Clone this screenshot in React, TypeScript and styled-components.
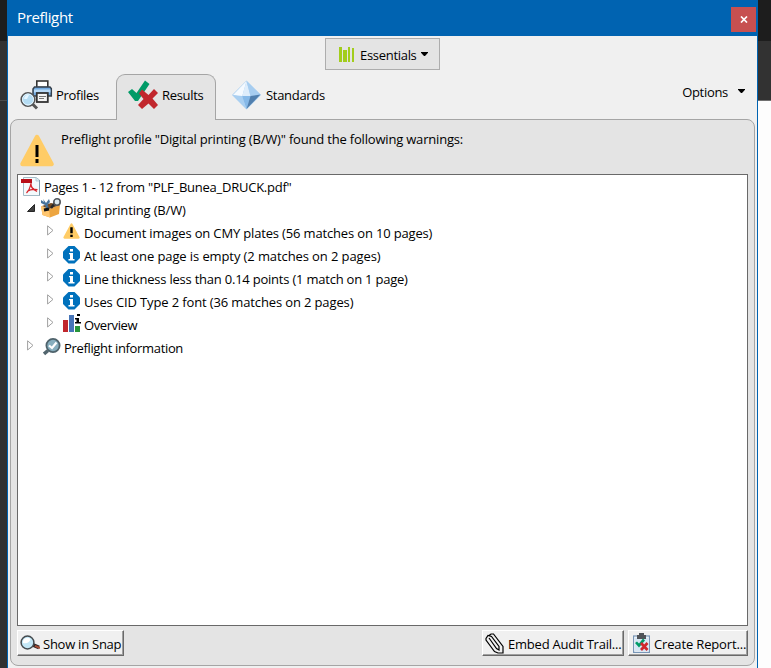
import React from "react";
import styled, { createGlobalStyle } from "styled-components";

const GlobalStyle = createGlobalStyle`
  * { box-sizing: border-box; }
  body { margin: 0; font-family: "Open Sans", "Noto Sans", sans-serif; font-size: 13px; color: #000; }
  svg { display: block; flex: none; }
`;

const Desktop = styled.div`
  display: grid;
  grid-template-columns: 7px 751px 13px;
  width: 771px;
  height: 668px;
  overflow: hidden;
`;
const LeftEdge = styled.div`
  background: linear-gradient(#1d1d1d 41px, #323232 41px, #323232 100px, #4c4c4c 100px, #4c4c4c 101px, #313131 101px);
`;
const RightEdge = styled.div`
  background: linear-gradient(#1d1d1d 41px, #323232 41px, #323232 100px, #707070 100px, #707070 101px, #fdfdfd 101px);
`;
const Window = styled.div`
  display: flex;
  flex-direction: column;
  height: 668px;
  background: #f0f0f0;
  border: solid #0063b1;
  border-width: 0 1px;
`;
const TitleBar = styled.div`
  display: flex;
  justify-content: space-between;
  height: 36px;
  padding: 7px 1px 0 9px;
  margin: 0 -1px;
  background: #0063b1;
  color: #fff;
`;
const Title = styled.div`
  font-size: 15px;
  line-height: 20px;
  padding-left: 1px;
  letter-spacing: -0.35px;
`;
const CloseButton = styled.div`
  display: flex;
  align-items: center;
  justify-content: center;
  width: 25px;
  height: 25px;
  margin-right: 1px;
  background: #c75050;
`;
const Label = styled.span<{ $track?: number; $drop?: number }>`
  white-space: pre;
  line-height: 18px;
  letter-spacing: ${(p) => p.$track ?? -0.3}px;
  margin-top: ${(p) => p.$drop ?? 0}px;
`;
const Toolbar = styled.div`
  display: flex;
  padding: 2px 0 0 317px;
  height: 38px;
`;
const DropButton = styled.div`
  display: flex;
  align-items: center;
  width: 115px;
  height: 32px;
  padding-left: 12px;
  background: #e4e4e4;
  border: 1px solid #adadad;
  & > span { flex: none; width: 61px; margin-left: 6px; }
`;
const TabStrip = styled.div`
  display: flex;
  height: 46px;
  padding-left: 12px;
  z-index: 1;
`;
const Tab = styled.div<{ $width: number; $gap: number; $inset?: number; $active?: boolean }>`
  display: flex;
  align-items: center;
  gap: ${(p) => p.$gap}px;
  width: ${(p) => p.$width}px;
  height: 46px;
  padding: 0 0 ${(p) => (p.$active ? 5 : 4)}px ${(p) => p.$inset ?? 0}px;
  border: ${(p) => (p.$active ? "1px solid #a5a5a5" : "0")};
  border-bottom: 0;
  border-radius: 9px 9px 0 0;
  background: ${(p) => (p.$active ? "#e4e4e4" : "transparent")};
`;
const Options = styled.div`
  display: flex;
  align-items: center;
  height: 36px;
  margin-left: auto;
  padding-right: 12px;
  gap: 10px;
  & > svg { margin-bottom: 2px; }
`;
const Panel = styled.div`
  display: flex;
  flex-direction: column;
  height: 547px;
  margin: -1px 2px 0;
  padding: 0 6px;
  background: #e4e4e4;
  border: 1px solid #a5a5a5;
  border-radius: 8px;
`;
const Message = styled.div`
  display: flex;
  align-items: flex-start;
  height: 54px;
  padding: 10px 0 0 3px;
  gap: 7px;
  & > svg { margin-top: 4px; }
`;
const Tree = styled.div`
  width: 731px;
  height: 452px;
  padding-top: 1px;
  background: #fff;
  border: 1px solid #696969;
`;
const Row = styled.div<{ $indent: number }>`
  display: flex;
  align-items: flex-start;
  height: 23px;
  padding-left: ${(p) => p.$indent}px;
`;
const Twisty = styled.div<{ $width: number }>`
  width: ${(p) => p.$width}px;
  padding-top: 3px;
`;
const IconCell = styled.div<{ $width: number; $top: number }>`
  width: ${(p) => p.$width}px;
  margin-top: ${(p) => p.$top}px;
`;
const Actions = styled.div`
  display: flex;
  gap: 4px;
  padding-top: 4px;
`;
const PushButton = styled.div<{ $width: number; $gap: number; $inset?: number; $right?: boolean }>`
  display: flex;
  align-items: center;
  gap: ${(p) => p.$gap}px;
  width: ${(p) => p.$width}px;
  height: 26px;
  padding-left: ${(p) => p.$inset ?? 2}px;
  margin-left: ${(p) => (p.$right ? "auto" : "0")};
  background: #f0f0f0;
  border: 1px solid;
  border-color: #fff #696969 #696969 #fff;
  box-shadow: inset -1px -1px #a0a0a0;
`;

const DownArrow = () => (
  <svg width="7" height="4" viewBox="0 0 7 4"><path d="M0 0H7V.8L4 4H3L0 .8Z" fill="#000" /></svg>
);

const CloseIcon = () => (
  <svg width="8" height="7" viewBox="0 0 8 7"><path d="M1 .5L7 6.5M7 .5L1 6.5" stroke="#fff" strokeWidth="1.7" /></svg>
);

const BarsIcon = () => (
  <svg width="16" height="16" viewBox="0 0 16 16" fill="#a2cd1c">
    <path d="M1 1H4V16H1ZM5 4H9V16H5ZM10 1H12V16H10ZM14 2H16V16H14Z" />
  </svg>
);

const ProfilesIcon = () => (
  <svg width="34" height="30" viewBox="0 0 34 30">
    <rect x="16.8" y="1" width="11" height="8" fill="#fff" stroke="#333" strokeWidth="1.6" />
    <path d="M18 6H27V9H18Z" fill="#bbb" />
    <path d="M14.5 7H30L31.3 8.5V16H13V9Z" fill="#74abe0" stroke="#35404c" strokeWidth="1.5" />
    <path d="M14 9.5H30.5V12.5H14Z" fill="#b7d9f7" />
    <rect x="16.8" y="13" width="11" height="9" fill="#f4f4f4" stroke="#333" strokeWidth="1.8" />
    <path d="M19 16.5H26M19 18.5H24" stroke="#777" />
    <path d="M12.5 24L17 28.5" stroke="#555" strokeWidth="3" />
    <circle cx="8" cy="19.5" r="6.8" fill="#b4dcf3" stroke="#555" strokeWidth="1.6" />
    <circle cx="8" cy="19.5" r="5.5" fill="none" stroke="#e6f6ff" />
    <path d="M4 19A4 4 0 0 1 9 15L7 19Z" fill="#e6f6ff" />
  </svg>
);

const ResultsIcon = () => (
  <svg width="31" height="30" viewBox="0 0 31 30">
    <path d="M0 12L4 9L8.5 13L17 0.5L21.5 4L10 21H7Z" fill="#009b67" />
    <path d="M14 9.5L20.5 15L26 9L30 13L24.5 18.5L30 25L26 29L20.5 23.5L14 29L10 25L15.5 19L11 13.5Z" fill="#c1272d" />
  </svg>
);

const StandardsIcon = () => (
  <svg width="29" height="30" viewBox="0 0 29 30">
    <path d="M14.5 .5L0 15L14.5 29.5L29 15Z" fill="#a8cef0" />
    <path d="M14.5 1L1 15L10 17Z" fill="#f5faff" />
    <path d="M14.5 1L10 17L18.5 16Z" fill="#deedfb" />
    <path d="M14.5 1L18.5 16L28.5 14.5Z" fill="#a7cdf0" />
    <path d="M10 16L18.5 16L14.5 29Z" fill="#86b9e8" />
    <path d="M18.5 16L28.5 14.5L14.5 29Z" fill="#517fae" />
    <path d="M1 15L10 16L14.5 29Z" fill="#a9cff1" />
  </svg>
);

const WarningIcon = ({ size }: { size: "large" | "small" }) => (
  <svg width={size === "large" ? 34 : 17} height={size === "large" ? 33 : 16} viewBox="0 0 34 33">
    <path d="M17 3L31.5 30H2.5Z" fill="#ffcc66" stroke="#ffcc66" strokeWidth="4.5" strokeLinejoin="round" />
    {size === "large"
      ? <path d="M15.5 11H18.5V23H15.5ZM15.5 25H18.5V29H15.5Z" />
      : <path d="M14.5 9H19.5V21H14.5ZM14.5 24H19.5V29H14.5Z" />}
  </svg>
);

const InfoIcon = () => (
  <svg width="17" height="18" viewBox="0 0 17 18">
    <path d="M5.5 0H11.5L17 5.5V12L11.5 17.5H5.5L0 12V5.5Z" fill="#0071bc" />
    <path d="M7 3H10V5.5H7ZM6 7H10V13H11.5V14.5H5.5V13H7V8.3H6Z" fill="#fff" />
  </svg>
);

const PdfIcon = () => (
  <svg width="20" height="19" viewBox="0 0 20 19">
    <path d="M2.5 .5H15L18.5 3V18.5H2.5Z" fill="#f4fafc" stroke="#a3bbc6" />
    <path d="M15 .5V4H18.5" fill="#d7e8ef" stroke="#b6ccd7" />
    <path d="M18.5 3V18.5" stroke="#7e9aaa" />
    <rect y="2" width="11" height="4" fill="#b80f18" />
    <path d="M10 6C9.5 9 8.5 13 5.5 16M10 6C9.5 9.5 11.5 12.5 16 14.5M6 14.5C9 12.5 12 12 16.5 12.7" fill="none" stroke="#d8242b" strokeWidth="1.25" />
  </svg>
);

const ToolboxIcon = () => (
  <svg width="21" height="20" viewBox="0 0 21 20">
    <path d="M0 8L8 11L19 7L18 16L9 19.5L1.5 17Z" fill="#eda540" />
    <path d="M0 8L8 11L9 19.5L1.5 17Z" fill="#ffc66f" />
    <path d="M1 8L10 5L19 7L8 11Z" fill="#744b23" />
    <path d="M2 1L5 5L8 1L9 4L6.5 7L8.5 11L5.5 11.5L4 7L0 5V2L3 4Z" fill="#46729b" />
    <path d="M10 10L14 5" stroke="#252525" strokeWidth="2.5" />
    <path d="M3 12L8 11" stroke="#111" strokeWidth="3" />
    <circle cx="16" cy="4" r="3.2" fill="#dceaf0" stroke="#52565a" strokeWidth="1.6" />
  </svg>
);

const OverviewIcon = () => (
  <svg width="18" height="18" viewBox="0 0 18 18">
    <rect y="6" width="5" height="12" fill="#c1272d" />
    <rect x="6" y="1" width="5" height="17" fill="#4775b8" />
    <rect x="12" y="12" width="5" height="6" fill="#28953a" />
    <path d="M14 0H17V2H14ZM12 4H16V8H18V9.5H12V8H13.5V5.5H12Z" />
  </svg>
);

const MagnifierCheckIcon = () => (
  <svg width="18" height="18" viewBox="0 0 18 18">
    <path d="M1 16L5 12.5" stroke="#52656e" strokeWidth="3.5" />
    <circle cx="10" cy="7.5" r="6.6" fill="#87aebe" stroke="#4e626b" strokeWidth="1.8" />
    <path d="M6 7.5L9 10L13.5 4.5" fill="none" stroke="#fff" strokeWidth="2.2" />
  </svg>
);

const LensIcon = () => (
  <svg width="20" height="17" viewBox="0 0 20 17">
    <path d="M12 9.5L19 12.5" stroke="#302a2a" strokeWidth="3.8" />
    <path d="M15 10.8L20 13" stroke="#a84d35" strokeWidth="2" />
    <circle cx="7.5" cy="7.5" r="6.4" fill="#c3e8f7" stroke="#454b4f" strokeWidth="1.5" />
    <path d="M3 8A4.5 4.5 0 0 1 10.5 4C10 7 7 9 3 8Z" fill="#fff" />
  </svg>
);

const ClipIcon = () => (
  <svg width="19" height="21" viewBox="0 0 19 21">
    <path d="M4 5L11.5 15.5L14 17V13.5L6.5 3.5L3 2.5L1 5.5V7L9.5 18.5L13 20H18V13.5L8.5 1H6L4 2.5" fill="none" stroke="#000" strokeWidth="1.2" />
  </svg>
);

const ReportIcon = () => (
  <svg width="17" height="20" viewBox="0 0 17 20">
    <rect x=".6" y="3" width="15.8" height="16.4" fill="#fafdff" stroke="#7896b7" strokeWidth="1.2" />
    <path d="M2 4.5H15V18H2Z" fill="#d6e6f4" />
    <path d="M6 0H11V2H13V6H4V2H6Z" fill="#505459" />
    <path d="M2 10L4 8.5L6 10.5L10 5.5L12 7.5L6 14.5Z" fill="#009b67" />
    <path d="M8 10L14.5 17M14.5 10L8 17" stroke="#d1272d" strokeWidth="2.7" />
  </svg>
);

const Expander = ({ open }: { open?: boolean }) => (
  <svg width="9" height="11" viewBox="0 0 9 11">
    {open
      ? <path d="M7.5 2.5V9.5H.5Z" fill="#404040" stroke="#262626" />
      : <path d="M.6 .8V10L6 5.4Z" fill="#fff" stroke="#a0a0a0" />}
  </svg>
);

type Item = {
  indent: number;
  twisty: number;
  text: string;
  track: number;
  icon: React.ReactNode;
  cell: number;
  top: number;
  open?: boolean;
};

const items: Item[] = [
  { indent: 9, twisty: 14, text: "Digital printing (B/W)", track: -0.16, icon: <ToolboxIcon />, cell: 23, top: -1, open: true },
  { indent: 29, twisty: 16, text: "Document images on CMY plates (56 matches on 10 pages)", track: -0.16, icon: <WarningIcon size="small" />, cell: 21, top: 1 },
  { indent: 29, twisty: 16, text: "At least one page is empty (2 matches on 2 pages)", track: -0.1, icon: <InfoIcon />, cell: 21, top: 1 },
  { indent: 29, twisty: 16, text: "Line thickness less than 0.14 points (1 match on 1 page)", track: -0.22, icon: <InfoIcon />, cell: 21, top: 1 },
  { indent: 29, twisty: 16, text: "Uses CID Type 2 font (36 matches on 2 pages)", track: -0.13, icon: <InfoIcon />, cell: 21, top: 1 },
  { indent: 29, twisty: 16, text: "Overview", track: -0.4, icon: <OverviewIcon />, cell: 21, top: 0 },
  { indent: 9, twisty: 16, text: "Preflight information", track: -0.34, icon: <MagnifierCheckIcon />, cell: 21, top: 1 },
];

export default function App() {
  return (
    <>
      <GlobalStyle />
      <Desktop>
        <LeftEdge />
        <Window>
          <TitleBar>
            <Title>Preflight</Title>
            <CloseButton><CloseIcon /></CloseButton>
          </TitleBar>
          <Toolbar>
            <DropButton>
              <BarsIcon />
              <Label $drop={1}>Essentials</Label>
              <DownArrow />
            </DropButton>
          </Toolbar>
          <TabStrip>
            <Tab $width={96} $gap={2}>
              <ProfilesIcon />
              <Label>Profiles</Label>
            </Tab>
            <Tab $width={100} $gap={3} $inset={11} $active>
              <ResultsIcon />
              <Label>Results</Label>
            </Tab>
            <Tab $width={130} $gap={5} $inset={16}>
              <StandardsIcon />
              <Label>Standards</Label>
            </Tab>
            <Options>
              <Label>Options</Label>
              <DownArrow />
            </Options>
          </TabStrip>
          <Panel>
            <Message>
              <WarningIcon size="large" />
              <Label $track={-0.19}>Preflight profile "Digital printing (B/W)" found the following warnings:</Label>
            </Message>
            <Tree>
              <Row $indent={3}>
                <IconCell $width={23} $top={1}><PdfIcon /></IconCell>
                <Label $track={-0.25} $drop={2}>Pages 1 - 12 from "PLF_Bunea_DRUCK.pdf"</Label>
              </Row>
              {items.map((item) => (
                <Row key={item.text} $indent={item.indent}>
                  <Twisty $width={item.twisty}><Expander open={item.open} /></Twisty>
                  <IconCell $width={item.cell} $top={item.top}>{item.icon}</IconCell>
                  <Label $track={item.track} $drop={2}>{item.text}</Label>
                </Row>
              ))}
            </Tree>
            <Actions>
              <PushButton $width={107} $gap={3}>
                <LensIcon />
                <Label $track={-0.25} $drop={2}>Show in Snap</Label>
              </PushButton>
              <PushButton $width={142} $gap={4} $right>
                <ClipIcon />
                <Label $track={-0.22} $drop={2}>Embed Audit Trail...</Label>
              </PushButton>
              <PushButton $width={120} $gap={4} $inset={4}>
                <ReportIcon />
                <Label $track={-0.15} $drop={2}>Create Report...</Label>
              </PushButton>
            </Actions>
          </Panel>
        </Window>
        <RightEdge />
      </Desktop>
    </>
  );
}
